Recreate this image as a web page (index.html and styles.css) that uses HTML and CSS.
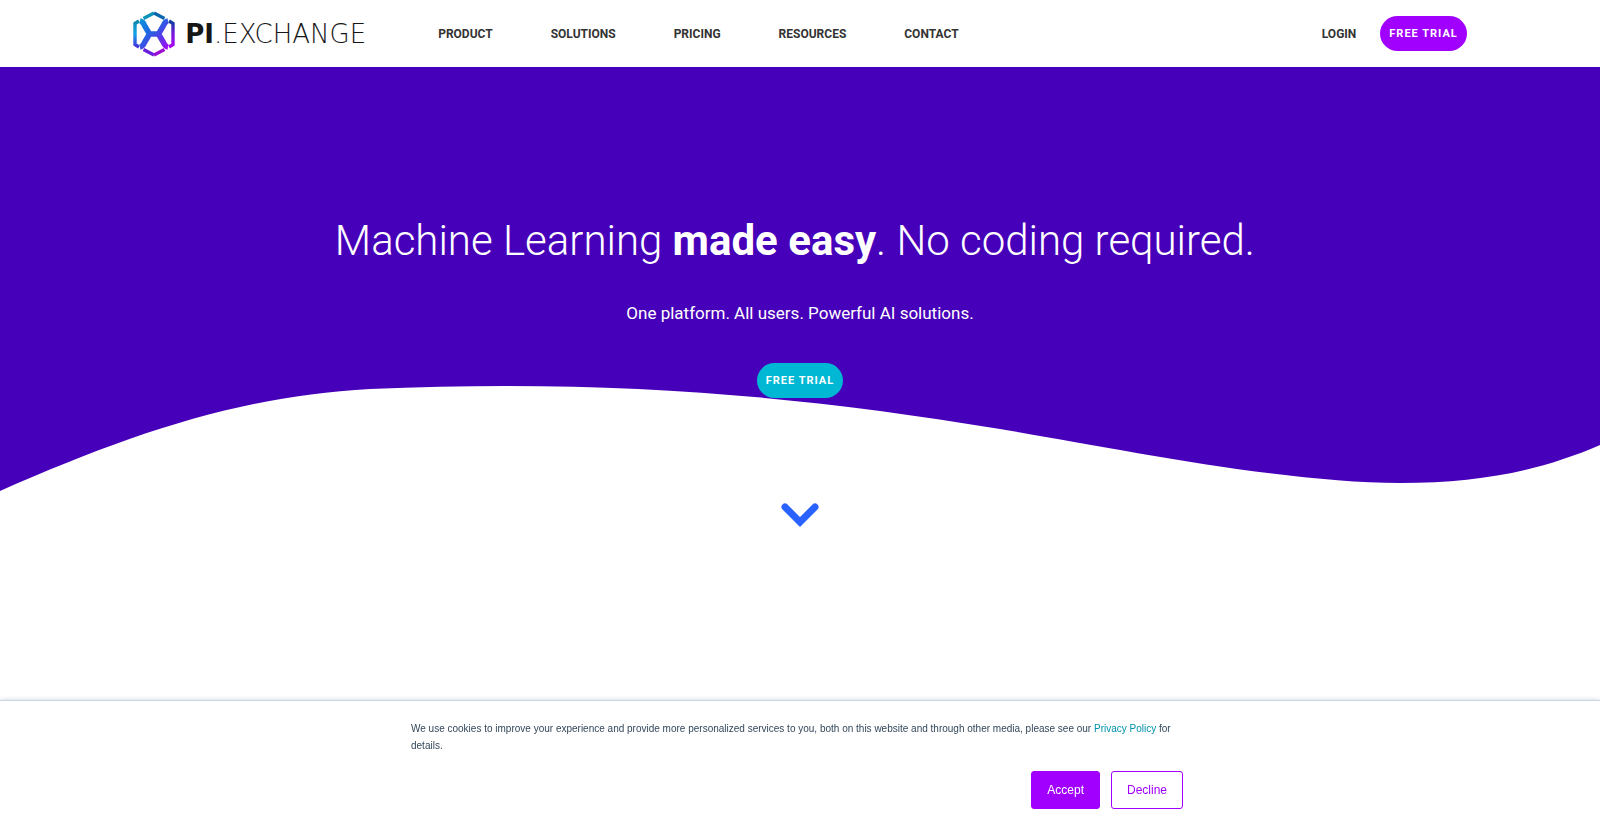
FILE: index.html
```html
<!DOCTYPE html>
<html lang="en">
<head>
<meta charset="utf-8">
<meta name="viewport" content="width=device-width, initial-scale=1">
<title>PI.EXCHANGE</title>
<link rel="stylesheet" href="styles.css">
</head>
<body>
<header class="site-header">
  <a class="logo" href="#" aria-label="PI.EXCHANGE">
    <svg class="logo-mark" viewBox="0 0 42 46" aria-hidden="true">
      <defs>
        <linearGradient id="edge" x1="4" y1="6" x2="36" y2="40" gradientUnits="userSpaceOnUse">
          <stop offset="0" stop-color="#08a0d6"/><stop offset=".4" stop-color="#1d68e2"/><stop offset=".6" stop-color="#4a45e6"/><stop offset="1" stop-color="#b000f8"/>
        </linearGradient>
        <linearGradient id="right" x1="0" y1="10" x2="0" y2="36" gradientUnits="userSpaceOnUse">
          <stop offset="0" stop-color="#0c3f9c"/><stop offset=".5" stop-color="#7a18dc"/><stop offset="1" stop-color="#a908f6"/>
        </linearGradient>
        <linearGradient id="left" x1="0" y1="10" x2="0" y2="36" gradientUnits="userSpaceOnUse">
          <stop offset="0" stop-color="#0a87ab"/><stop offset=".5" stop-color="#14a4e8"/><stop offset="1" stop-color="#4330dd"/>
        </linearGradient>
      </defs>
      <g fill="none" stroke-width="3.400">
        <path stroke="url(#left)" d="M6 10 2 12.500v21l4 2.500"/>
        <path stroke="url(#right)" d="M36 10 40 12.500v21l-4 2.500"/>
        <path stroke="#0d93b7" d="M10.500 7.500 21 2"/>
        <path stroke="#0b66ae" d="M21 2 31.500 7.500"/>
        <path stroke="#6820dc" d="M10.500 38.500 21 44"/>
        <path stroke="#9c0ed2" d="M21 44 31.500 38.500"/>
      </g>
      <path fill="none" stroke="url(#edge)" stroke-width="5.500" stroke-linejoin="round" d="M7 10c3 .5 3.500 2 4.500 4.500L16.500 23l-5 8.500C10.500 34 10 35.500 7 36M35 10c-3 .5-3.500 2-4.500 4.500L25.500 23l5 8.500c1 2.500 1.500 4 4.500 4.500M16 23h10"/>
    </svg>
    <span class="logo-text"><strong>PI</strong>.EXCHANGE</span>
  </a>
  <nav class="main-nav" aria-label="Main">
    <a href="#">PRODUCT</a>
    <a href="#">SOLUTIONS</a>
    <a href="#">PRICING</a>
    <a href="#">RESOURCES</a>
    <a href="#">CONTACT</a>
  </nav>
  <div class="account">
    <a class="login" href="#">LOGIN</a>
    <a class="pill" href="#">FREE TRIAL</a>
  </div>
</header>

<main>
  <section class="hero">
    <svg class="wave" viewBox="0 0 1600 424" preserveAspectRatio="none" aria-hidden="true">
      <path fill="#4700b9" d="M0 0H1600V378C1540 404 1480 416 1400 416C1280 416 1110 380 1000 362C790 327 600 312 370 322C240 329 130 367 0 424Z"/>
    </svg>
    <h1>Machine Learning <strong>made easy</strong>. No coding required.&nbsp;</h1>
    <p class="tagline">One platform. All users. Powerful AI solutions.</p>
    <a class="pill pill-teal" href="#">FREE TRIAL</a>
  </section>
  <a class="scroll-down" href="#more" aria-label="Scroll down">
    <svg viewBox="0 0 38 24" aria-hidden="true"><path fill="none" stroke="#2962ff" stroke-width="7" stroke-linecap="round" d="M4 4 19 19 34 4"/></svg>
  </a>
</main>

<aside class="cookies" aria-label="Cookie notice">
  <div class="cookies-inner">
    <p>We use cookies to improve your experience and provide more personalized services to you, both on this website and through other media, please see our <a href="#">Privacy Policy</a> for details.</p>
    <div class="cookie-actions">
      <button class="accept" type="button">Accept</button>
      <button class="decline" type="button">Decline</button>
    </div>
  </div>
</aside>
</body>
</html>
```
FILE: styles.css
```css
* { box-sizing: border-box; }
body {
  margin: 0;
  min-height: 100vh;
  background: #fff;
  color: #333;
  font-family: Roboto, sans-serif;
}
a { text-decoration: none; color: inherit; }

.site-header {
  display: flex;
  align-items: center;
  height: 67px;
  padding: 0 8.33%;
  font-size: 12px;
  font-weight: 700;
}
.logo { display: flex; align-items: center; gap: 10px; color: #161616; }
.logo-mark { width: 42px; height: 46px; }
.logo-text {
  font: 200 26px/1 "DejaVu Sans Light", "DejaVu Sans", sans-serif;
}
.logo-text strong { font-family: "DejaVu Sans", sans-serif; font-weight: 700; }
.main-nav { display: flex; gap: 58px; margin-left: 72px; }
.account { display: flex; align-items: center; gap: 24px; margin-left: auto; }

.pill {
  display: inline-block;
  padding: 0 9px;
  border-radius: 18px;
  background: #a100ff;
  color: #fff;
  font-size: 11px;
  font-weight: 700;
  line-height: 35px;
  letter-spacing: 1px;
  white-space: nowrap;
}
.pill-teal { background: #00b8d4; }

.hero {
  position: relative;
  padding: 144px 24px 93px;
  color: #fff;
  text-align: center;
}
.wave { position: absolute; inset: 0; width: 100%; height: 100%; z-index: -1; }
.hero h1 {
  margin: 0;
  font: 300 42px/60px Roboto, sans-serif;
}
.hero h1 strong { font-weight: 700; }
.tagline { margin: 28px 0 36px; font-size: 17px; line-height: 28px; }

.scroll-down { display: block; width: 38px; margin: 12px auto 0; }
.scroll-down svg { display: block; width: 38px; height: 24px; }

.cookies {
  position: fixed;
  right: 0;
  bottom: 0;
  left: 0;
  padding: 19px 30px 25px 24px;
  border-top: 1px solid #cbd6e2;
  background: #fff;
  box-shadow: 0 0 5px #cbd6e2;
  font-family: "Liberation Sans", Arial, sans-serif;
}
.cookies-inner { max-width: 772px; margin: 0 auto; }
.cookies p { margin: 0 0 17px; color: #33475b; font-size: 10px; line-height: 17px; }
.cookies p a { color: #0091ae; }
.cookie-actions { display: flex; justify-content: flex-end; gap: 11px; }
.cookie-actions button {
  padding: 10px 15px;
  border: 1px solid #a100ff;
  border-radius: 3px;
  font: 12px/16px "Liberation Sans", Arial, sans-serif;
}
.cookie-actions .accept { background: #a100ff; color: #fff; }
.cookie-actions .decline { background: #fff; color: #a100ff; }
```
